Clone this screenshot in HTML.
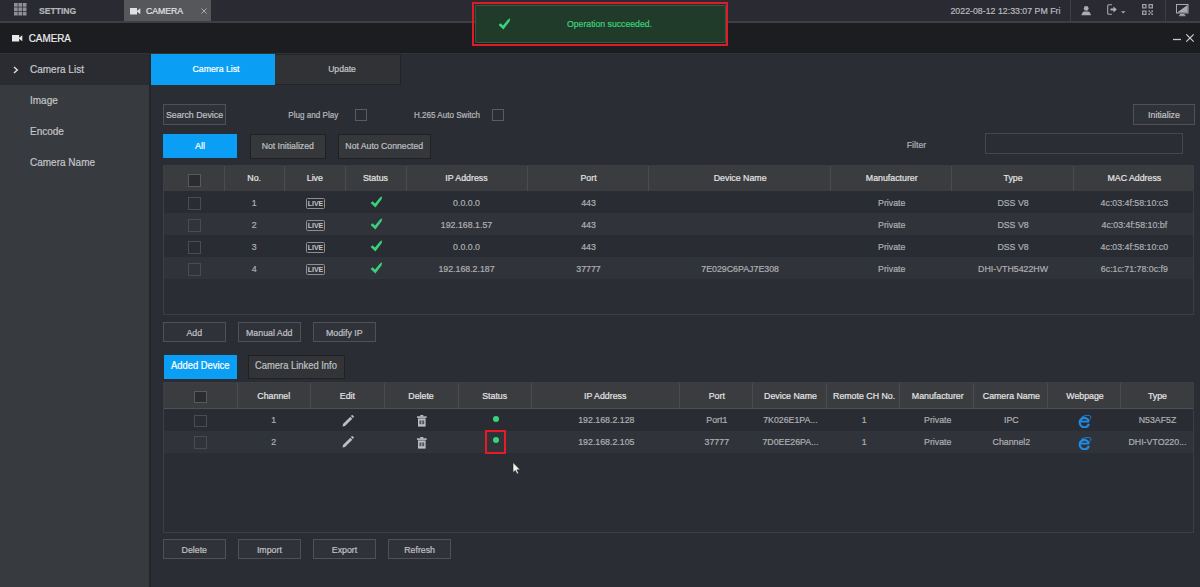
<!DOCTYPE html><html><head><meta charset="utf-8"><style>
html,body{margin:0;padding:0}
body{width:1200px;height:587px;overflow:hidden;position:relative;background:#2a2d34;font-family:"Liberation Sans",sans-serif}
div{box-sizing:border-box}
span{display:inline-block;transform:scaleY(1.08);-webkit-text-stroke:0.2px currentColor}
</style></head><body>
<div style="position:absolute;left:0px;top:0px;width:1200px;height:21px;background:#292a32"></div>
<div style="position:absolute;left:0px;top:21px;width:1200px;height:2px;background:#3d3f45"></div>
<svg style="position:absolute;left:14px;top:3.3px" width="13" height="13" viewBox="0 0 13 13" fill="#8e9095"><rect x="0.00" y="0.00" width="3.7" height="3.7"/><rect x="0.00" y="4.40" width="3.7" height="3.7"/><rect x="0.00" y="8.80" width="3.7" height="3.7"/><rect x="4.40" y="0.00" width="3.7" height="3.7"/><rect x="4.40" y="4.40" width="3.7" height="3.7"/><rect x="4.40" y="8.80" width="3.7" height="3.7"/><rect x="8.80" y="0.00" width="3.7" height="3.7"/><rect x="8.80" y="4.40" width="3.7" height="3.7"/><rect x="8.80" y="8.80" width="3.7" height="3.7"/></svg>
<div style="position:absolute;left:39px;top:4px;width:60px;height:14px;display:flex;align-items:center;justify-content:flex-start;font-size:8.6px;color:#b4b5b8;white-space:nowrap;line-height:1;font-weight:bold"><span>SETTING</span></div>
<div style="position:absolute;left:124px;top:0px;width:87px;height:21px;background:#56575a"></div>
<svg style="position:absolute;left:130px;top:7.8px" width="11" height="7" viewBox="0 0 11 7"><rect x="0" y="0" width="7" height="6.5" fill="#e0e0e0"/><path d="M6.5 3.2 L10.3 0.3 V6.2 Z" fill="#e0e0e0"/></svg>
<div style="position:absolute;left:146px;top:4px;width:50px;height:14px;display:flex;align-items:center;justify-content:flex-start;font-size:8.7px;color:#e2e2e2;white-space:nowrap;line-height:1;"><span>CAMERA</span></div>
<svg style="position:absolute;left:200.5px;top:8px" width="6" height="6" viewBox="0 0 6 6"><path d="M0.5 0.5 L5.5 5.5 M5.5 0.5 L0.5 5.5" stroke="#a8a9ac" stroke-width="1"/></svg>
<div style="position:absolute;left:940px;top:4px;width:120.5px;height:14px;display:flex;align-items:center;justify-content:flex-end;font-size:8.8px;color:#b9babd;white-space:nowrap;line-height:1;"><span>2022-08-12 12:33:07 PM Fri</span></div>
<div style="position:absolute;left:1070px;top:0px;width:1px;height:21px;background:#3d3f45"></div>
<div style="position:absolute;left:1165px;top:0px;width:1px;height:21px;background:#3d3f45"></div>
<svg style="position:absolute;left:1081px;top:5px" width="11" height="11" viewBox="0 0 11 11"><circle cx="5.2" cy="3.4" r="2.4" fill="#acadb0"/><path d="M0.3 10.3 L1.6 7.4 Q2.2 6.6 3.4 6.6 H7 Q8.2 6.6 8.8 7.4 L10.1 10.3 Z" fill="#acadb0"/></svg>
<svg style="position:absolute;left:1107px;top:4px" width="20" height="12" viewBox="0 0 20 12"><path d="M5 0.7 H1.7 Q0.7 0.7 0.7 1.7 V9.3 Q0.7 10.3 1.7 10.3 H5" stroke="#a8a9ac" stroke-width="1.1" fill="none"/><path d="M3.5 4.5 H6.5 V2.4 L9.8 5.5 L6.5 8.6 V6.5 H3.5 Z" fill="#b0b1b4"/><path d="M14 7.2 H18.5 L16.25 9.6 Z" fill="#a8a9ac"/></svg>
<svg style="position:absolute;left:1141.5px;top:3.5px" width="11" height="11" viewBox="0 0 11 11"><g fill="#9c9da0"><path d="M0 0h4.6v4.6H0Z M1.3 1.3v2h2v-2Z"/><path d="M6.4 0h4.6v4.6H6.4Z M7.7 1.3v2h2v-2Z"/><path d="M0 6.4h4.6V11H0Z M1.3 7.7v2h2v-2Z"/><rect x="6.4" y="6.4" width="1.6" height="1.6"/><rect x="9.4" y="6.4" width="1.6" height="1.6"/><rect x="7.9" y="7.9" width="1.6" height="1.6"/><rect x="6.4" y="9.4" width="1.6" height="1.6"/><rect x="9.4" y="9.4" width="1.6" height="1.6"/></g></svg>
<svg style="position:absolute;left:1176px;top:4px" width="13" height="13" viewBox="0 0 13 13"><rect x="0.5" y="0.5" width="11.5" height="8.5" fill="none" stroke="#a8a9ac" stroke-width="1"/><path d="M1 8.5 L11.5 1 V8.5 Z" fill="#a8a9ac"/><rect x="4" y="10" width="4.5" height="1.2" fill="#a8a9ac"/><rect x="3" y="11.2" width="6.5" height="1" fill="#a8a9ac"/></svg>
<div style="position:absolute;left:0px;top:23px;width:1200px;height:30px;background:#1c1d20"></div>
<div style="position:absolute;left:0px;top:52.5px;width:1200px;height:1px;background:#303236"></div>
<svg style="position:absolute;left:12px;top:35px" width="11" height="7" viewBox="0 0 11 7"><rect x="0" y="0" width="7.2" height="6.5" fill="#e8e8e8"/><path d="M6.5 3.2 L10.3 0.2 V6.3 Z" fill="#e8e8e8"/></svg>
<div style="position:absolute;left:28.7px;top:32px;width:60px;height:14px;display:flex;align-items:center;justify-content:flex-start;font-size:9.9px;color:#ececec;white-space:nowrap;line-height:1;"><span>CAMERA</span></div>
<svg style="position:absolute;left:1172px;top:33px" width="24" height="10" viewBox="0 0 24 10"><path d="M1 6.5 H9" stroke="#c8c8c8" stroke-width="1.3"/><path d="M14.3 1.3 L21.7 8.7 M21.7 1.3 L14.3 8.7" stroke="#d0d0d0" stroke-width="1.2"/></svg>
<div style="position:absolute;left:0px;top:53.5px;width:149px;height:533.5px;background:#373a3f"></div>
<div style="position:absolute;left:0px;top:53.5px;width:149px;height:31.5px;background:#2a2c31"></div>
<div style="position:absolute;left:149px;top:53.5px;width:2px;height:533.5px;background:#24262a"></div>
<svg style="position:absolute;left:12.5px;top:66px" width="6" height="8" viewBox="0 0 6 8"><path d="M1 1 L4.3 4 L1 7" stroke="#e0e0e0" stroke-width="1.4" fill="none"/></svg>
<div style="position:absolute;left:30px;top:62.5px;width:110px;height:14px;display:flex;align-items:center;justify-content:flex-start;font-size:10.0px;color:#c8c9cc;white-space:nowrap;line-height:1;"><span>Camera List</span></div>
<div style="position:absolute;left:30px;top:93.5px;width:110px;height:14px;display:flex;align-items:center;justify-content:flex-start;font-size:10.0px;color:#c4c5c8;white-space:nowrap;line-height:1;"><span>Image</span></div>
<div style="position:absolute;left:30px;top:124.5px;width:110px;height:14px;display:flex;align-items:center;justify-content:flex-start;font-size:10.0px;color:#c4c5c8;white-space:nowrap;line-height:1;"><span>Encode</span></div>
<div style="position:absolute;left:30px;top:155.5px;width:110px;height:14px;display:flex;align-items:center;justify-content:flex-start;font-size:10.0px;color:#c4c5c8;white-space:nowrap;line-height:1;"><span>Camera Name</span></div>
<div style="position:absolute;left:151px;top:53.5px;width:124px;height:31.5px;background:#0a9ff5"></div>
<div style="position:absolute;left:154px;top:53.5px;width:124px;height:31.5px;display:flex;align-items:center;justify-content:center;font-size:8.7px;color:#ffffff;white-space:nowrap;line-height:1;"><span>Camera List</span></div>
<div style="position:absolute;left:275px;top:53.5px;width:126px;height:31.5px;background:#303236;border:1px solid #222428;border-left:none"></div>
<div style="position:absolute;left:279px;top:53.5px;width:126px;height:31.5px;display:flex;align-items:center;justify-content:center;font-size:8.6px;color:#c4c5c8;white-space:nowrap;line-height:1;"><span>Update</span></div>
<div style="position:absolute;left:163px;top:104px;width:63px;height:21px;background:#30323a;border:1px solid #4f5156"></div>
<div style="position:absolute;left:163px;top:104.8px;width:63px;height:21px;display:flex;align-items:center;justify-content:center;font-size:8.8px;color:#c0c1c4;white-space:nowrap;line-height:1;"><span>Search Device</span></div>
<div style="position:absolute;left:278.3px;top:105.5px;width:70px;height:21px;display:flex;align-items:center;justify-content:center;font-size:8.1px;color:#b8b9bc;white-space:nowrap;line-height:1;"><span>Plug and Play</span></div>
<div style="position:absolute;left:355px;top:108.5px;width:12px;height:12px;border:1px solid #5a5c61"></div>
<div style="position:absolute;left:404.5px;top:105.5px;width:85px;height:21px;display:flex;align-items:center;justify-content:center;font-size:8.1px;color:#b8b9bc;white-space:nowrap;line-height:1;"><span>H.265 Auto Switch</span></div>
<div style="position:absolute;left:491.5px;top:108.5px;width:12px;height:12px;border:1px solid #5a5c61"></div>
<div style="position:absolute;left:1133px;top:104px;width:62px;height:21px;background:#30323a;border:1px solid #4f5156"></div>
<div style="position:absolute;left:1133px;top:104.8px;width:62px;height:21px;display:flex;align-items:center;justify-content:center;font-size:8.8px;color:#c0c1c4;white-space:nowrap;line-height:1;"><span>Initialize</span></div>
<div style="position:absolute;left:163px;top:134px;width:74px;height:24px;background:#0a9ff5"></div>
<div style="position:absolute;left:163px;top:134px;width:74px;height:24px;display:flex;align-items:center;justify-content:center;font-size:9px;color:#ffffff;white-space:nowrap;line-height:1;"><span>All</span></div>
<div style="position:absolute;left:250px;top:133.5px;width:75.5px;height:25px;background:#35373b;border:1px solid #1f2124"></div>
<div style="position:absolute;left:250px;top:133.5px;width:75.5px;height:25px;display:flex;align-items:center;justify-content:center;font-size:8.7px;color:#bfc0c3;white-space:nowrap;line-height:1;"><span>Not Initialized</span></div>
<div style="position:absolute;left:338px;top:133.5px;width:92.5px;height:25px;background:#35373b;border:1px solid #1f2124"></div>
<div style="position:absolute;left:338px;top:133.5px;width:92.5px;height:25px;display:flex;align-items:center;justify-content:center;font-size:8.7px;color:#bfc0c3;white-space:nowrap;line-height:1;"><span>Not Auto Connected</span></div>
<div style="position:absolute;left:881.5px;top:135.2px;width:70px;height:20px;display:flex;align-items:center;justify-content:center;font-size:8.8px;color:#b0b1b4;white-space:nowrap;line-height:1;"><span>Filter</span></div>
<div style="position:absolute;left:985px;top:133.2px;width:197.5px;height:20.5px;border:1px solid #45474c;background:#2a2d34"></div>
<div style="position:absolute;left:163px;top:165px;width:1031px;height:150px;border:1px solid #3c3e44;background:#2a2d34"></div>
<div style="position:absolute;left:164px;top:165.5px;width:1029px;height:25.5px;background:#3a3c40"></div>
<div style="position:absolute;left:164px;top:190.6px;width:1029px;height:1.1px;background:#4e5055"></div>
<div style="position:absolute;left:223.64705882352942px;top:166px;width:1px;height:24.5px;background:#4a4c50"></div>
<div style="position:absolute;left:284.29411764705884px;top:166px;width:1px;height:24.5px;background:#4a4c50"></div>
<div style="position:absolute;left:344.94117647058823px;top:166px;width:1px;height:24.5px;background:#4a4c50"></div>
<div style="position:absolute;left:405.5882352941176px;top:166px;width:1px;height:24.5px;background:#4a4c50"></div>
<div style="position:absolute;left:526.8823529411765px;top:166px;width:1px;height:24.5px;background:#4a4c50"></div>
<div style="position:absolute;left:648.1764705882352px;top:166px;width:1px;height:24.5px;background:#4a4c50"></div>
<div style="position:absolute;left:830.1176470588234px;top:166px;width:1px;height:24.5px;background:#4a4c50"></div>
<div style="position:absolute;left:951.4117647058822px;top:166px;width:1px;height:24.5px;background:#4a4c50"></div>
<div style="position:absolute;left:1072.705882352941px;top:166px;width:1px;height:24.5px;background:#4a4c50"></div>
<div style="position:absolute;left:223.8470588235294px;top:166.6px;width:60.64705882352941px;height:24.5px;display:flex;align-items:center;justify-content:center;font-size:8.8px;color:#e4e4e4;white-space:nowrap;line-height:1;"><span>No.</span></div>
<div style="position:absolute;left:284.49411764705883px;top:166.6px;width:60.64705882352941px;height:24.5px;display:flex;align-items:center;justify-content:center;font-size:8.8px;color:#e4e4e4;white-space:nowrap;line-height:1;"><span>Live</span></div>
<div style="position:absolute;left:345.1411764705882px;top:166.6px;width:60.64705882352941px;height:24.5px;display:flex;align-items:center;justify-content:center;font-size:8.8px;color:#e4e4e4;white-space:nowrap;line-height:1;"><span>Status</span></div>
<div style="position:absolute;left:405.7882352941176px;top:166.6px;width:121.29411764705883px;height:24.5px;display:flex;align-items:center;justify-content:center;font-size:8.8px;color:#e4e4e4;white-space:nowrap;line-height:1;"><span>IP Address</span></div>
<div style="position:absolute;left:527.8823529411765px;top:166.6px;width:121.29411764705883px;height:24.5px;display:flex;align-items:center;justify-content:center;font-size:8.8px;color:#e4e4e4;white-space:nowrap;line-height:1;"><span>Port</span></div>
<div style="position:absolute;left:649.1764705882352px;top:166.6px;width:181.94117647058823px;height:24.5px;display:flex;align-items:center;justify-content:center;font-size:8.8px;color:#e4e4e4;white-space:nowrap;line-height:1;"><span>Device Name</span></div>
<div style="position:absolute;left:831.1176470588234px;top:166.6px;width:121.29411764705883px;height:24.5px;display:flex;align-items:center;justify-content:center;font-size:8.8px;color:#e4e4e4;white-space:nowrap;line-height:1;"><span>Manufacturer</span></div>
<div style="position:absolute;left:952.4117647058822px;top:166.6px;width:121.29411764705883px;height:24.5px;display:flex;align-items:center;justify-content:center;font-size:8.8px;color:#e4e4e4;white-space:nowrap;line-height:1;"><span>Type</span></div>
<div style="position:absolute;left:1073.705882352941px;top:166.6px;width:121.29411764705883px;height:24.5px;display:flex;align-items:center;justify-content:center;font-size:8.8px;color:#e4e4e4;white-space:nowrap;line-height:1;"><span>MAC Address</span></div>
<div style="position:absolute;left:187.5px;top:174px;width:13px;height:12.5px;background:#2a2c30;border:1px solid #57595e"></div>
<div style="position:absolute;left:164px;top:191.4px;width:1029px;height:22px;background:#292c33"></div>
<div style="position:absolute;left:187.5px;top:197.4px;width:13px;height:12.5px;border:1px solid #4a4c51"></div>
<div style="position:absolute;left:223.8470588235294px;top:192.0px;width:60.64705882352941px;height:22px;display:flex;align-items:center;justify-content:center;font-size:8.8px;color:#aeafb2;white-space:nowrap;line-height:1;"><span>1</span></div>
<div style="position:absolute;left:306px;top:197.9px;width:19px;height:11.5px;border:1px solid #8e8f93;border-radius:1.5px;font-size:7px;font-weight:bold;color:#c4c4c4;display:flex;align-items:center;justify-content:center;line-height:1">LIVE</div>
<svg style="position:absolute;left:370px;top:196.4px" width="13" height="12" viewBox="0 0 13 12"><path d="M0.6 7.0 L2.6 5.3 L5.0 7.6 L10.0 1.6 L12.2 0.3 L11.6 3.2 L5.4 11.6 Z" fill="#3dd07c"/></svg>
<div style="position:absolute;left:405.88823529411764px;top:192.0px;width:121.29411764705883px;height:22px;display:flex;align-items:center;justify-content:center;font-size:8.8px;color:#aeafb2;white-space:nowrap;line-height:1;"><span>0.0.0.0</span></div>
<div style="position:absolute;left:527.8823529411765px;top:192.0px;width:121.29411764705883px;height:22px;display:flex;align-items:center;justify-content:center;font-size:8.8px;color:#aeafb2;white-space:nowrap;line-height:1;"><span>443</span></div>
<div style="position:absolute;left:649.1764705882352px;top:192.0px;width:181.94117647058823px;height:22px;display:flex;align-items:center;justify-content:center;font-size:8.8px;color:#aeafb2;white-space:nowrap;line-height:1;"><span></span></div>
<div style="position:absolute;left:831.1176470588234px;top:192.0px;width:121.29411764705883px;height:22px;display:flex;align-items:center;justify-content:center;font-size:8.8px;color:#aeafb2;white-space:nowrap;line-height:1;"><span>Private</span></div>
<div style="position:absolute;left:952.4117647058822px;top:192.0px;width:121.29411764705883px;height:22px;display:flex;align-items:center;justify-content:center;font-size:8.8px;color:#aeafb2;white-space:nowrap;line-height:1;"><span>DSS V8</span></div>
<div style="position:absolute;left:1073.705882352941px;top:192.0px;width:121.29411764705883px;height:22px;display:flex;align-items:center;justify-content:center;font-size:8.8px;color:#aeafb2;white-space:nowrap;line-height:1;"><span>4c:03:4f:58:10:c3</span></div>
<div style="position:absolute;left:164px;top:213.4px;width:1029px;height:22px;background:#31333a"></div>
<div style="position:absolute;left:187.5px;top:219.4px;width:13px;height:12.5px;border:1px solid #4a4c51"></div>
<div style="position:absolute;left:223.8470588235294px;top:214.0px;width:60.64705882352941px;height:22px;display:flex;align-items:center;justify-content:center;font-size:8.8px;color:#aeafb2;white-space:nowrap;line-height:1;"><span>2</span></div>
<div style="position:absolute;left:306px;top:219.9px;width:19px;height:11.5px;border:1px solid #8e8f93;border-radius:1.5px;font-size:7px;font-weight:bold;color:#c4c4c4;display:flex;align-items:center;justify-content:center;line-height:1">LIVE</div>
<svg style="position:absolute;left:370px;top:218.4px" width="13" height="12" viewBox="0 0 13 12"><path d="M0.6 7.0 L2.6 5.3 L5.0 7.6 L10.0 1.6 L12.2 0.3 L11.6 3.2 L5.4 11.6 Z" fill="#3dd07c"/></svg>
<div style="position:absolute;left:405.88823529411764px;top:214.0px;width:121.29411764705883px;height:22px;display:flex;align-items:center;justify-content:center;font-size:8.8px;color:#aeafb2;white-space:nowrap;line-height:1;"><span>192.168.1.57</span></div>
<div style="position:absolute;left:527.8823529411765px;top:214.0px;width:121.29411764705883px;height:22px;display:flex;align-items:center;justify-content:center;font-size:8.8px;color:#aeafb2;white-space:nowrap;line-height:1;"><span>443</span></div>
<div style="position:absolute;left:649.1764705882352px;top:214.0px;width:181.94117647058823px;height:22px;display:flex;align-items:center;justify-content:center;font-size:8.8px;color:#aeafb2;white-space:nowrap;line-height:1;"><span></span></div>
<div style="position:absolute;left:831.1176470588234px;top:214.0px;width:121.29411764705883px;height:22px;display:flex;align-items:center;justify-content:center;font-size:8.8px;color:#aeafb2;white-space:nowrap;line-height:1;"><span>Private</span></div>
<div style="position:absolute;left:952.4117647058822px;top:214.0px;width:121.29411764705883px;height:22px;display:flex;align-items:center;justify-content:center;font-size:8.8px;color:#aeafb2;white-space:nowrap;line-height:1;"><span>DSS V8</span></div>
<div style="position:absolute;left:1073.705882352941px;top:214.0px;width:121.29411764705883px;height:22px;display:flex;align-items:center;justify-content:center;font-size:8.8px;color:#aeafb2;white-space:nowrap;line-height:1;"><span>4c:03:4f:58:10:bf</span></div>
<div style="position:absolute;left:164px;top:235.4px;width:1029px;height:22px;background:#292c33"></div>
<div style="position:absolute;left:187.5px;top:241.4px;width:13px;height:12.5px;border:1px solid #4a4c51"></div>
<div style="position:absolute;left:223.8470588235294px;top:236.0px;width:60.64705882352941px;height:22px;display:flex;align-items:center;justify-content:center;font-size:8.8px;color:#aeafb2;white-space:nowrap;line-height:1;"><span>3</span></div>
<div style="position:absolute;left:306px;top:241.9px;width:19px;height:11.5px;border:1px solid #8e8f93;border-radius:1.5px;font-size:7px;font-weight:bold;color:#c4c4c4;display:flex;align-items:center;justify-content:center;line-height:1">LIVE</div>
<svg style="position:absolute;left:370px;top:240.4px" width="13" height="12" viewBox="0 0 13 12"><path d="M0.6 7.0 L2.6 5.3 L5.0 7.6 L10.0 1.6 L12.2 0.3 L11.6 3.2 L5.4 11.6 Z" fill="#3dd07c"/></svg>
<div style="position:absolute;left:405.88823529411764px;top:236.0px;width:121.29411764705883px;height:22px;display:flex;align-items:center;justify-content:center;font-size:8.8px;color:#aeafb2;white-space:nowrap;line-height:1;"><span>0.0.0.0</span></div>
<div style="position:absolute;left:527.8823529411765px;top:236.0px;width:121.29411764705883px;height:22px;display:flex;align-items:center;justify-content:center;font-size:8.8px;color:#aeafb2;white-space:nowrap;line-height:1;"><span>443</span></div>
<div style="position:absolute;left:649.1764705882352px;top:236.0px;width:181.94117647058823px;height:22px;display:flex;align-items:center;justify-content:center;font-size:8.8px;color:#aeafb2;white-space:nowrap;line-height:1;"><span></span></div>
<div style="position:absolute;left:831.1176470588234px;top:236.0px;width:121.29411764705883px;height:22px;display:flex;align-items:center;justify-content:center;font-size:8.8px;color:#aeafb2;white-space:nowrap;line-height:1;"><span>Private</span></div>
<div style="position:absolute;left:952.4117647058822px;top:236.0px;width:121.29411764705883px;height:22px;display:flex;align-items:center;justify-content:center;font-size:8.8px;color:#aeafb2;white-space:nowrap;line-height:1;"><span>DSS V8</span></div>
<div style="position:absolute;left:1073.705882352941px;top:236.0px;width:121.29411764705883px;height:22px;display:flex;align-items:center;justify-content:center;font-size:8.8px;color:#aeafb2;white-space:nowrap;line-height:1;"><span>4c:03:4f:58:10:c0</span></div>
<div style="position:absolute;left:164px;top:257.4px;width:1029px;height:22px;background:#31333a"></div>
<div style="position:absolute;left:187.5px;top:263.4px;width:13px;height:12.5px;border:1px solid #4a4c51"></div>
<div style="position:absolute;left:223.8470588235294px;top:258.0px;width:60.64705882352941px;height:22px;display:flex;align-items:center;justify-content:center;font-size:8.8px;color:#aeafb2;white-space:nowrap;line-height:1;"><span>4</span></div>
<div style="position:absolute;left:306px;top:263.9px;width:19px;height:11.5px;border:1px solid #8e8f93;border-radius:1.5px;font-size:7px;font-weight:bold;color:#c4c4c4;display:flex;align-items:center;justify-content:center;line-height:1">LIVE</div>
<svg style="position:absolute;left:370px;top:262.4px" width="13" height="12" viewBox="0 0 13 12"><path d="M0.6 7.0 L2.6 5.3 L5.0 7.6 L10.0 1.6 L12.2 0.3 L11.6 3.2 L5.4 11.6 Z" fill="#3dd07c"/></svg>
<div style="position:absolute;left:405.88823529411764px;top:258.0px;width:121.29411764705883px;height:22px;display:flex;align-items:center;justify-content:center;font-size:8.8px;color:#aeafb2;white-space:nowrap;line-height:1;"><span>192.168.2.187</span></div>
<div style="position:absolute;left:527.8823529411765px;top:258.0px;width:121.29411764705883px;height:22px;display:flex;align-items:center;justify-content:center;font-size:8.8px;color:#aeafb2;white-space:nowrap;line-height:1;"><span>37777</span></div>
<div style="position:absolute;left:649.1764705882352px;top:258.0px;width:181.94117647058823px;height:22px;display:flex;align-items:center;justify-content:center;font-size:8.8px;color:#aeafb2;white-space:nowrap;line-height:1;"><span>7E029C6PAJ7E308</span></div>
<div style="position:absolute;left:831.1176470588234px;top:258.0px;width:121.29411764705883px;height:22px;display:flex;align-items:center;justify-content:center;font-size:8.8px;color:#aeafb2;white-space:nowrap;line-height:1;"><span>Private</span></div>
<div style="position:absolute;left:952.4117647058822px;top:258.0px;width:121.29411764705883px;height:22px;display:flex;align-items:center;justify-content:center;font-size:8.8px;color:#aeafb2;white-space:nowrap;line-height:1;"><span>DHI-VTH5422HW</span></div>
<div style="position:absolute;left:1073.705882352941px;top:258.0px;width:121.29411764705883px;height:22px;display:flex;align-items:center;justify-content:center;font-size:8.8px;color:#aeafb2;white-space:nowrap;line-height:1;"><span>6c:1c:71:78:0c:f9</span></div>
<div style="position:absolute;left:163px;top:321.5px;width:62.5px;height:20.5px;background:#30323a;border:1px solid #4f5156"></div>
<div style="position:absolute;left:163px;top:322.8px;width:62.5px;height:20.5px;display:flex;align-items:center;justify-content:center;font-size:8.8px;color:#c0c1c4;white-space:nowrap;line-height:1;"><span>Add</span></div>
<div style="position:absolute;left:238px;top:321.5px;width:62.5px;height:20.5px;background:#30323a;border:1px solid #4f5156"></div>
<div style="position:absolute;left:238px;top:322.8px;width:62.5px;height:20.5px;display:flex;align-items:center;justify-content:center;font-size:8.8px;color:#c0c1c4;white-space:nowrap;line-height:1;"><span>Manual Add</span></div>
<div style="position:absolute;left:313px;top:321.5px;width:62.5px;height:20.5px;background:#30323a;border:1px solid #4f5156"></div>
<div style="position:absolute;left:313px;top:322.8px;width:62.5px;height:20.5px;display:flex;align-items:center;justify-content:center;font-size:8.8px;color:#c0c1c4;white-space:nowrap;line-height:1;"><span>Modify IP</span></div>
<div style="position:absolute;left:163.5px;top:354.5px;width:73.5px;height:24.5px;background:#0a9ff5"></div>
<div style="position:absolute;left:163.5px;top:353.5px;width:73.5px;height:24.5px;display:flex;align-items:center;justify-content:center;font-size:9.4px;color:#ffffff;white-space:nowrap;line-height:1;"><span>Added Device</span></div>
<div style="position:absolute;left:247.5px;top:354.5px;width:97px;height:24.5px;background:#323438;border:1px solid #1f2124"></div>
<div style="position:absolute;left:247.5px;top:353.8px;width:97px;height:24.5px;display:flex;align-items:center;justify-content:center;font-size:9.4px;color:#bfc0c3;white-space:nowrap;line-height:1;"><span>Camera Linked Info</span></div>
<div style="position:absolute;left:163px;top:382px;width:1031px;height:150.5px;border:1px solid #3c3e44;background:#2a2d34"></div>
<div style="position:absolute;left:164px;top:382.5px;width:1029px;height:25.8px;background:#3a3c40"></div>
<div style="position:absolute;left:164px;top:408.2px;width:1029px;height:1.1px;background:#4e5055"></div>
<div style="position:absolute;left:236.64285714285714px;top:383px;width:1px;height:25.3px;background:#4a4c50"></div>
<div style="position:absolute;left:310.2857142857143px;top:383px;width:1px;height:25.3px;background:#4a4c50"></div>
<div style="position:absolute;left:383.92857142857144px;top:383px;width:1px;height:25.3px;background:#4a4c50"></div>
<div style="position:absolute;left:457.57142857142856px;top:383px;width:1px;height:25.3px;background:#4a4c50"></div>
<div style="position:absolute;left:531.2142857142857px;top:383px;width:1px;height:25.3px;background:#4a4c50"></div>
<div style="position:absolute;left:678.5px;top:383px;width:1px;height:25.3px;background:#4a4c50"></div>
<div style="position:absolute;left:752.1428571428571px;top:383px;width:1px;height:25.3px;background:#4a4c50"></div>
<div style="position:absolute;left:825.7857142857142px;top:383px;width:1px;height:25.3px;background:#4a4c50"></div>
<div style="position:absolute;left:899.4285714285713px;top:383px;width:1px;height:25.3px;background:#4a4c50"></div>
<div style="position:absolute;left:973.0714285714284px;top:383px;width:1px;height:25.3px;background:#4a4c50"></div>
<div style="position:absolute;left:1046.7142857142856px;top:383px;width:1px;height:25.3px;background:#4a4c50"></div>
<div style="position:absolute;left:1120.3571428571427px;top:383px;width:1px;height:25.3px;background:#4a4c50"></div>
<div style="position:absolute;left:236.94285714285715px;top:383.6px;width:73.64285714285714px;height:25.3px;display:flex;align-items:center;justify-content:center;font-size:8.8px;color:#e4e4e4;white-space:nowrap;line-height:1;"><span>Channel</span></div>
<div style="position:absolute;left:310.5857142857143px;top:383.6px;width:73.64285714285714px;height:25.3px;display:flex;align-items:center;justify-content:center;font-size:8.8px;color:#e4e4e4;white-space:nowrap;line-height:1;"><span>Edit</span></div>
<div style="position:absolute;left:384.22857142857146px;top:383.6px;width:73.64285714285714px;height:25.3px;display:flex;align-items:center;justify-content:center;font-size:8.8px;color:#e4e4e4;white-space:nowrap;line-height:1;"><span>Delete</span></div>
<div style="position:absolute;left:457.87142857142857px;top:383.6px;width:73.64285714285714px;height:25.3px;display:flex;align-items:center;justify-content:center;font-size:8.8px;color:#e4e4e4;white-space:nowrap;line-height:1;"><span>Status</span></div>
<div style="position:absolute;left:531.5142857142856px;top:383.6px;width:147.28571428571428px;height:25.3px;display:flex;align-items:center;justify-content:center;font-size:8.8px;color:#e4e4e4;white-space:nowrap;line-height:1;"><span>IP Address</span></div>
<div style="position:absolute;left:680.0px;top:383.6px;width:73.64285714285714px;height:25.3px;display:flex;align-items:center;justify-content:center;font-size:8.8px;color:#e4e4e4;white-space:nowrap;line-height:1;"><span>Port</span></div>
<div style="position:absolute;left:753.6428571428571px;top:383.6px;width:73.64285714285714px;height:25.3px;display:flex;align-items:center;justify-content:center;font-size:8.8px;color:#e4e4e4;white-space:nowrap;line-height:1;"><span>Device Name</span></div>
<div style="position:absolute;left:827.2857142857142px;top:383.6px;width:73.64285714285714px;height:25.3px;display:flex;align-items:center;justify-content:center;font-size:8.8px;color:#e4e4e4;white-space:nowrap;line-height:1;"><span>Remote CH No.</span></div>
<div style="position:absolute;left:900.9285714285713px;top:383.6px;width:73.64285714285714px;height:25.3px;display:flex;align-items:center;justify-content:center;font-size:8.8px;color:#e4e4e4;white-space:nowrap;line-height:1;"><span>Manufacturer</span></div>
<div style="position:absolute;left:974.5714285714284px;top:383.6px;width:73.64285714285714px;height:25.3px;display:flex;align-items:center;justify-content:center;font-size:8.8px;color:#e4e4e4;white-space:nowrap;line-height:1;"><span>Camera Name</span></div>
<div style="position:absolute;left:1048.2142857142856px;top:383.6px;width:73.64285714285714px;height:25.3px;display:flex;align-items:center;justify-content:center;font-size:8.8px;color:#e4e4e4;white-space:nowrap;line-height:1;"><span>Webpage</span></div>
<div style="position:absolute;left:1120.6571428571426px;top:383.6px;width:73.64285714285714px;height:25.3px;display:flex;align-items:center;justify-content:center;font-size:8.8px;color:#e4e4e4;white-space:nowrap;line-height:1;"><span>Type</span></div>
<div style="position:absolute;left:193.5px;top:390.5px;width:13px;height:12.5px;background:#2a2c30;border:1px solid #57595e"></div>
<div style="position:absolute;left:164px;top:409.6px;width:1029px;height:21.6px;background:#292c33"></div>
<div style="position:absolute;left:193.5px;top:414.6px;width:13px;height:12.5px;border:1px solid #4a4c51"></div>
<div style="position:absolute;left:236.94285714285715px;top:410.1px;width:73.64285714285714px;height:21.6px;display:flex;align-items:center;justify-content:center;font-size:8.8px;color:#aeafb2;white-space:nowrap;line-height:1;"><span>1</span></div>
<svg style="position:absolute;left:341.5px;top:414.8px" width="13" height="12" viewBox="0 0 13 12"><path d="M0.6 11.4 L1.0 9.0 L8.3 1.7 L10.3 3.7 L3.0 11.0 Z" fill="#bdbec2"/><path d="M8.9 1.1 L9.9 0.1 Q10.3 -0.2 10.7 0.2 L11.8 1.3 Q12.1 1.7 11.8 2.1 L10.9 3.1 Z" fill="#bdbec2"/></svg>
<svg style="position:absolute;left:417px;top:414.90000000000003px" width="10" height="12" viewBox="0 0 10 12"><rect x="0" y="1.3" width="9.6" height="1.6" fill="#bdbec2"/><rect x="3.3" y="0" width="3" height="1.6" fill="#bdbec2"/><rect x="1" y="3.4" width="7.6" height="8.2" fill="#bdbec2"/><rect x="2.4" y="5.4" width="4.8" height="3.8" fill="#55575c"/><rect x="4.4" y="5.4" width="0.8" height="3.8" fill="#bdbec2"/></svg>
<div style="position:absolute;left:492.7px;top:415.5px;width:6.2px;height:6.2px;border-radius:50%;background:#3ad27a"></div>
<div style="position:absolute;left:532.7142857142857px;top:410.1px;width:147.28571428571428px;height:21.6px;display:flex;align-items:center;justify-content:center;font-size:8.8px;color:#aeafb2;white-space:nowrap;line-height:1;"><span>192.168.2.128</span></div>
<div style="position:absolute;left:680.0px;top:410.1px;width:73.64285714285714px;height:21.6px;display:flex;align-items:center;justify-content:center;font-size:8.8px;color:#aeafb2;white-space:nowrap;line-height:1;"><span>Port1</span></div>
<div style="position:absolute;left:753.6428571428571px;top:410.1px;width:73.64285714285714px;height:21.6px;display:flex;align-items:center;justify-content:center;font-size:8.8px;color:#aeafb2;white-space:nowrap;line-height:1;"><span>7K026E1PA...</span></div>
<div style="position:absolute;left:827.2857142857142px;top:410.1px;width:73.64285714285714px;height:21.6px;display:flex;align-items:center;justify-content:center;font-size:8.8px;color:#aeafb2;white-space:nowrap;line-height:1;"><span>1</span></div>
<div style="position:absolute;left:900.9285714285713px;top:410.1px;width:73.64285714285714px;height:21.6px;display:flex;align-items:center;justify-content:center;font-size:8.8px;color:#aeafb2;white-space:nowrap;line-height:1;"><span>Private</span></div>
<div style="position:absolute;left:974.5714285714284px;top:410.1px;width:73.64285714285714px;height:21.6px;display:flex;align-items:center;justify-content:center;font-size:8.8px;color:#aeafb2;white-space:nowrap;line-height:1;"><span>IPC</span></div>
<div style="position:absolute;left:1120.6571428571426px;top:410.1px;width:73.64285714285714px;height:21.6px;display:flex;align-items:center;justify-content:center;font-size:8.8px;color:#aeafb2;white-space:nowrap;line-height:1;"><span>N53AF5Z</span></div>
<svg style="position:absolute;left:1078px;top:415.20000000000005px" width="14" height="13" viewBox="0 0 14 13"><path d="M10.9 8.9 A4.7 4.7 0 1 1 10.9 6.3" stroke="#1f8be2" stroke-width="2.2" fill="none"/><rect x="2.2" y="5.6" width="9" height="1.9" fill="#1f8be2"/><path d="M3.5 2.2 C7 0.2 11.5 -0.4 12.6 1.2 C13.2 2.2 12.6 3.5 11.8 4.4" stroke="#1f8be2" stroke-width="0.9" fill="none"/></svg>
<div style="position:absolute;left:164px;top:431.20000000000005px;width:1029px;height:22px;background:#31333a"></div>
<div style="position:absolute;left:193.5px;top:436.20000000000005px;width:13px;height:12.5px;border:1px solid #4a4c51"></div>
<div style="position:absolute;left:236.94285714285715px;top:431.70000000000005px;width:73.64285714285714px;height:22px;display:flex;align-items:center;justify-content:center;font-size:8.8px;color:#aeafb2;white-space:nowrap;line-height:1;"><span>2</span></div>
<svg style="position:absolute;left:341.5px;top:436.40000000000003px" width="13" height="12" viewBox="0 0 13 12"><path d="M0.6 11.4 L1.0 9.0 L8.3 1.7 L10.3 3.7 L3.0 11.0 Z" fill="#bdbec2"/><path d="M8.9 1.1 L9.9 0.1 Q10.3 -0.2 10.7 0.2 L11.8 1.3 Q12.1 1.7 11.8 2.1 L10.9 3.1 Z" fill="#bdbec2"/></svg>
<svg style="position:absolute;left:417px;top:436.50000000000006px" width="10" height="12" viewBox="0 0 10 12"><rect x="0" y="1.3" width="9.6" height="1.6" fill="#bdbec2"/><rect x="3.3" y="0" width="3" height="1.6" fill="#bdbec2"/><rect x="1" y="3.4" width="7.6" height="8.2" fill="#bdbec2"/><rect x="2.4" y="5.4" width="4.8" height="3.8" fill="#55575c"/><rect x="4.4" y="5.4" width="0.8" height="3.8" fill="#bdbec2"/></svg>
<div style="position:absolute;left:492.7px;top:437.1px;width:6.2px;height:6.2px;border-radius:50%;background:#3ad27a"></div>
<div style="position:absolute;left:532.7142857142857px;top:431.70000000000005px;width:147.28571428571428px;height:22px;display:flex;align-items:center;justify-content:center;font-size:8.8px;color:#aeafb2;white-space:nowrap;line-height:1;"><span>192.168.2.105</span></div>
<div style="position:absolute;left:680.0px;top:431.70000000000005px;width:73.64285714285714px;height:22px;display:flex;align-items:center;justify-content:center;font-size:8.8px;color:#aeafb2;white-space:nowrap;line-height:1;"><span>37777</span></div>
<div style="position:absolute;left:753.6428571428571px;top:431.70000000000005px;width:73.64285714285714px;height:22px;display:flex;align-items:center;justify-content:center;font-size:8.8px;color:#aeafb2;white-space:nowrap;line-height:1;"><span>7D0EE26PA...</span></div>
<div style="position:absolute;left:827.2857142857142px;top:431.70000000000005px;width:73.64285714285714px;height:22px;display:flex;align-items:center;justify-content:center;font-size:8.8px;color:#aeafb2;white-space:nowrap;line-height:1;"><span>1</span></div>
<div style="position:absolute;left:900.9285714285713px;top:431.70000000000005px;width:73.64285714285714px;height:22px;display:flex;align-items:center;justify-content:center;font-size:8.8px;color:#aeafb2;white-space:nowrap;line-height:1;"><span>Private</span></div>
<div style="position:absolute;left:974.5714285714284px;top:431.70000000000005px;width:73.64285714285714px;height:22px;display:flex;align-items:center;justify-content:center;font-size:8.8px;color:#aeafb2;white-space:nowrap;line-height:1;"><span>Channel2</span></div>
<div style="position:absolute;left:1120.6571428571426px;top:431.70000000000005px;width:73.64285714285714px;height:22px;display:flex;align-items:center;justify-content:center;font-size:8.8px;color:#aeafb2;white-space:nowrap;line-height:1;"><span>DHI-VTO220...</span></div>
<svg style="position:absolute;left:1078px;top:436.80000000000007px" width="14" height="13" viewBox="0 0 14 13"><path d="M10.9 8.9 A4.7 4.7 0 1 1 10.9 6.3" stroke="#1f8be2" stroke-width="2.2" fill="none"/><rect x="2.2" y="5.6" width="9" height="1.9" fill="#1f8be2"/><path d="M3.5 2.2 C7 0.2 11.5 -0.4 12.6 1.2 C13.2 2.2 12.6 3.5 11.8 4.4" stroke="#1f8be2" stroke-width="0.9" fill="none"/></svg>
<div style="position:absolute;left:484.8px;top:430px;width:21px;height:23.5px;border:2px solid #e81a25"></div>
<svg style="position:absolute;left:511.5px;top:462px" width="9" height="13" viewBox="0 0 9 13"><path d="M1 0.5 V10.5 L3.3 8.4 L5 12 L6.6 11.3 L5 7.8 H8.2 Z" fill="#f4f4f4" stroke="#222" stroke-width="0.6"/></svg>
<div style="position:absolute;left:163.0px;top:538.5px;width:62.6px;height:20.5px;background:#30323a;border:1px solid #4f5156"></div>
<div style="position:absolute;left:163.0px;top:539.7px;width:62.6px;height:20.5px;display:flex;align-items:center;justify-content:center;font-size:8.8px;color:#c0c1c4;white-space:nowrap;line-height:1;"><span>Delete</span></div>
<div style="position:absolute;left:238.1px;top:538.5px;width:62.6px;height:20.5px;background:#30323a;border:1px solid #4f5156"></div>
<div style="position:absolute;left:238.1px;top:539.7px;width:62.6px;height:20.5px;display:flex;align-items:center;justify-content:center;font-size:8.8px;color:#c0c1c4;white-space:nowrap;line-height:1;"><span>Import</span></div>
<div style="position:absolute;left:313.2px;top:538.5px;width:62.6px;height:20.5px;background:#30323a;border:1px solid #4f5156"></div>
<div style="position:absolute;left:313.2px;top:539.7px;width:62.6px;height:20.5px;display:flex;align-items:center;justify-content:center;font-size:8.8px;color:#c0c1c4;white-space:nowrap;line-height:1;"><span>Export</span></div>
<div style="position:absolute;left:388.29999999999995px;top:538.5px;width:62.6px;height:20.5px;background:#30323a;border:1px solid #4f5156"></div>
<div style="position:absolute;left:388.29999999999995px;top:539.7px;width:62.6px;height:20.5px;display:flex;align-items:center;justify-content:center;font-size:8.8px;color:#c0c1c4;white-space:nowrap;line-height:1;"><span>Refresh</span></div>
<div style="position:absolute;left:471.5px;top:1.8px;width:256.5px;height:43.8px;border:2px solid #e01b27"></div>
<div style="position:absolute;left:475px;top:4.7px;width:250.5px;height:38.5px;background:#213b2a;border:1px solid #335a40;border-radius:1px"></div>
<svg style="position:absolute;left:497.5px;top:18.3px" width="13" height="12" viewBox="0 0 13 12"><path d="M0.6 7.0 L2.6 5.3 L5.0 7.6 L10.0 1.6 L12.2 0.3 L11.6 3.2 L5.4 11.6 Z" fill="#3ad37c"/></svg>
<div style="position:absolute;left:519.5px;top:14.5px;width:180px;height:20px;display:flex;align-items:center;justify-content:center;font-size:8.7px;color:#3ed07a;white-space:nowrap;line-height:1;"><span>Operation succeeded.</span></div>
</body></html>
